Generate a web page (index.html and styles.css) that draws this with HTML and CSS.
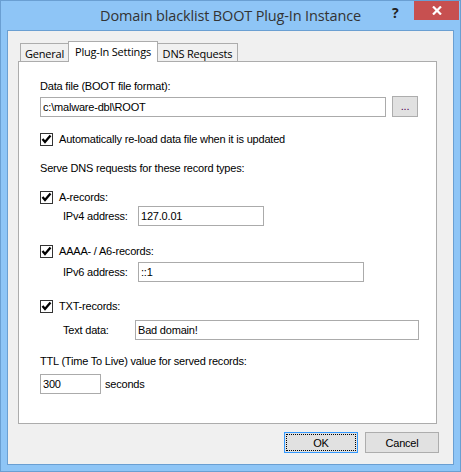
FILE: index.html
```html
<!DOCTYPE html>
<html>
<head>
<meta charset="utf-8">
<link rel="stylesheet" href="styles.css">
</head>
<body>
<div class="window">
  <div class="titlebar">
    <div class="title">Domain blacklist BOOT Plug-In Instance</div>
    <div class="help">?</div>
    <div class="close">
      <svg width="10" height="9" viewBox="0 0 10 9"><path d="M1 0.5 L9 8.5 M9 0.5 L1 8.5" stroke="#fff" stroke-width="2.2" fill="none"/></svg>
    </div>
  </div>
  <div class="client">
    <div class="tabs">
      <div class="tab tab-general">General</div>
      <div class="tab tab-active">Plug-In Settings</div>
      <div class="tab tab-dns">DNS Requests</div>
    </div>
    <div class="panel">
      <div class="label l-data">Data file (BOOT file format):</div>
      <div class="row r-file">
        <input class="edit e-file" value="c:\malware-dbl\ROOT" readonly>
        <div class="btn btn-browse">...</div>
      </div>
      <div class="check r-auto"><span class="box"><svg width="11" height="11" viewBox="0 0 11 11"><path d="M1.5 5 L4 8 L9.5 1.5" stroke="#000" stroke-width="2.3" fill="none"/></svg></span><span>Automatically re-load data file when it is updated</span></div>
      <div class="label l-serve">Serve DNS requests for these record types:</div>
      <div class="check r-a"><span class="box"><svg width="11" height="11" viewBox="0 0 11 11"><path d="M1.5 5 L4 8 L9.5 1.5" stroke="#000" stroke-width="2.3" fill="none"/></svg></span><span>A-records:</span></div>
      <div class="row sub r-ipv4"><span class="sublabel">IPv4 address:</span><input class="edit e-ipv4" value="127.0.01" readonly></div>
      <div class="check r-aaaa"><span class="box"><svg width="11" height="11" viewBox="0 0 11 11"><path d="M1.5 5 L4 8 L9.5 1.5" stroke="#000" stroke-width="2.3" fill="none"/></svg></span><span>AAAA- / A6-records:</span></div>
      <div class="row sub r-ipv6"><span class="sublabel">IPv6 address:</span><input class="edit e-ipv6" value="::1" readonly></div>
      <div class="check r-txt"><span class="box"><svg width="11" height="11" viewBox="0 0 11 11"><path d="M1.5 5 L4 8 L9.5 1.5" stroke="#000" stroke-width="2.3" fill="none"/></svg></span><span>TXT-records:</span></div>
      <div class="row sub r-text"><span class="sublabel sl-text">Text data:</span><input class="edit e-text" value="Bad domain!" readonly></div>
      <div class="label l-ttl">TTL (Time To Live) value for served records:</div>
      <div class="row r-ttl"><input class="edit e-ttl" value="300" readonly><span class="unit">seconds</span></div>
    </div>
    <div class="buttons">
      <div class="btn btn-ok"><span class="focus"></span>OK</div>
      <div class="btn btn-cancel">Cancel</div>
    </div>
  </div>
</div>
</body>
</html>
```

FILE: styles.css
```css
html, body {
  margin: 0;
  padding: 0;
}
body {
  width: 461px;
  height: 472px;
  overflow: hidden;
  font-family: "Liberation Sans", Arial, sans-serif;
  font-size: 11px;
  color: #000;
}
.window {
  box-sizing: border-box;
  width: 461px;
  height: 472px;
  border: 1px solid #6a9fd2;
  background: #8ec5f6;
  padding: 0 6px 6px 6px;
  display: flex;
  flex-direction: column;
}
.titlebar {
  position: relative;
  height: 29px;
  flex: none;
}
.title {
  text-align: center;
  font-family: "Open Sans", "Noto Sans", sans-serif;
  font-size: 14.5px;
  line-height: 29px;
  color: #333;
  letter-spacing: -0.15px;
}
.help {
  position: absolute;
  left: 385px;
  top: 4px;
  font-family: "Open Sans", sans-serif;
  font-weight: 700;
  font-size: 14px;
  color: #222;
  line-height: 16px;
}
.close {
  position: absolute;
  right: -5px;
  top: 0;
  width: 45px;
  height: 19px;
  background: #c75050;
  display: flex;
  align-items: center;
  justify-content: center;
}
.client {
  flex: 1;
  border: 1px solid #6a9fd2;
  background: #f0f0f0;
  padding: 10px 14px 0 10px;
  display: flex;
  flex-direction: column;
}
.tabs {
  display: flex;
  align-items: flex-end;
  height: 20px;
  padding-left: 2px;
  font-family: "Open Sans", "Noto Sans", sans-serif;
  font-size: 11px;
  letter-spacing: -0.2px;
}
.tab {
  box-sizing: border-box;
  height: 18px;
  border: 1px solid #acacac;
  border-bottom: none;
  background: #f0f0f0;
  display: flex;
  justify-content: center;
  align-items: center;
  padding-top: 1px;
  color: #000;
}
.tab-general {
  width: 48px;
  border-right: none;
}
.tab-active {
  width: 90px;
  height: 21px;
  background: #fff;
  margin-bottom: -1px;
  position: relative;
  z-index: 1;
  padding-top: 0;
  padding-bottom: 2px;
}
.tab-dns {
  width: 80px;
  border-left: none;
}
.panel {
  box-sizing: border-box;
  height: 363px;
  margin-right: 2px;
  border: 1px solid #acacac;
  background: #fff;
  padding-left: 21px;
  display: flex;
  flex-direction: column;
  align-items: flex-start;
  letter-spacing: -0.2px;
}
.label {
  line-height: 13px;
  height: 13px;
}
.l-data { margin-top: 18px; }
.l-serve { margin-top: 16px; }
.l-ttl { margin-top: 15px; }
.row {
  display: flex;
  align-items: center;
}
.edit {
  box-sizing: border-box;
  height: 20px;
  border: 1px solid #ababab;
  background: #fff;
  font-family: "Liberation Sans", Arial, sans-serif;
  font-size: 11px;
  letter-spacing: -0.2px;
  padding: 0 0 0 2px;
  margin: 0;
  outline: none;
  color: #000;
}
.r-file {
  margin-top: 3px;
  height: 21px;
  align-items: flex-start;
}
.e-file {
  width: 346px;
  margin-top: 1px;
}
.btn {
  box-sizing: border-box;
  border: 1px solid #adadad;
  background: #e1e1e1;
  display: flex;
  align-items: center;
  justify-content: center;
  position: relative;
}
.btn-browse {
  width: 26px;
  height: 21px;
  margin-left: 6px;
  color: #4b0050;
  padding-bottom: 2px;
}
.check {
  display: flex;
  align-items: center;
  height: 13px;
  line-height: 13px;
  gap: 6px;
}
.box {
  box-sizing: border-box;
  width: 13px;
  height: 13px;
  border: 1px solid #333;
  background: #fff;
  display: flex;
  align-items: center;
  justify-content: center;
}
.box svg { display: block; }
.r-auto { margin-top: 16px; }
.r-a { margin-top: 16px; }
.r-ipv4 { margin-top: 2px; }
.r-aaaa { margin-top: 19px; }
.r-ipv6 { margin-top: 4px; }
.r-txt { margin-top: 18px; }
.r-text { margin-top: 7px; }
.r-ttl { margin-top: 6px; }
.sub { padding-left: 23px; }
.sublabel { width: 75px; }
.sl-text { width: 72px; }
.e-ipv4 { width: 126px; }
.e-ipv6 { width: 226px; }
.e-text { width: 284px; }
.e-ttl { width: 61px; }
.unit { margin-left: 4px; }
.buttons {
  display: flex;
  justify-content: flex-end;
  gap: 7px;
  margin-top: 8px;
  letter-spacing: -0.2px;
}
.btn-ok, .btn-cancel {
  width: 74px;
  height: 21px;
}
.btn-ok {
  border-color: #3399ff;
}
.focus {
  position: absolute;
  inset: 1px;
  border: 1px dotted #000;
}
```
